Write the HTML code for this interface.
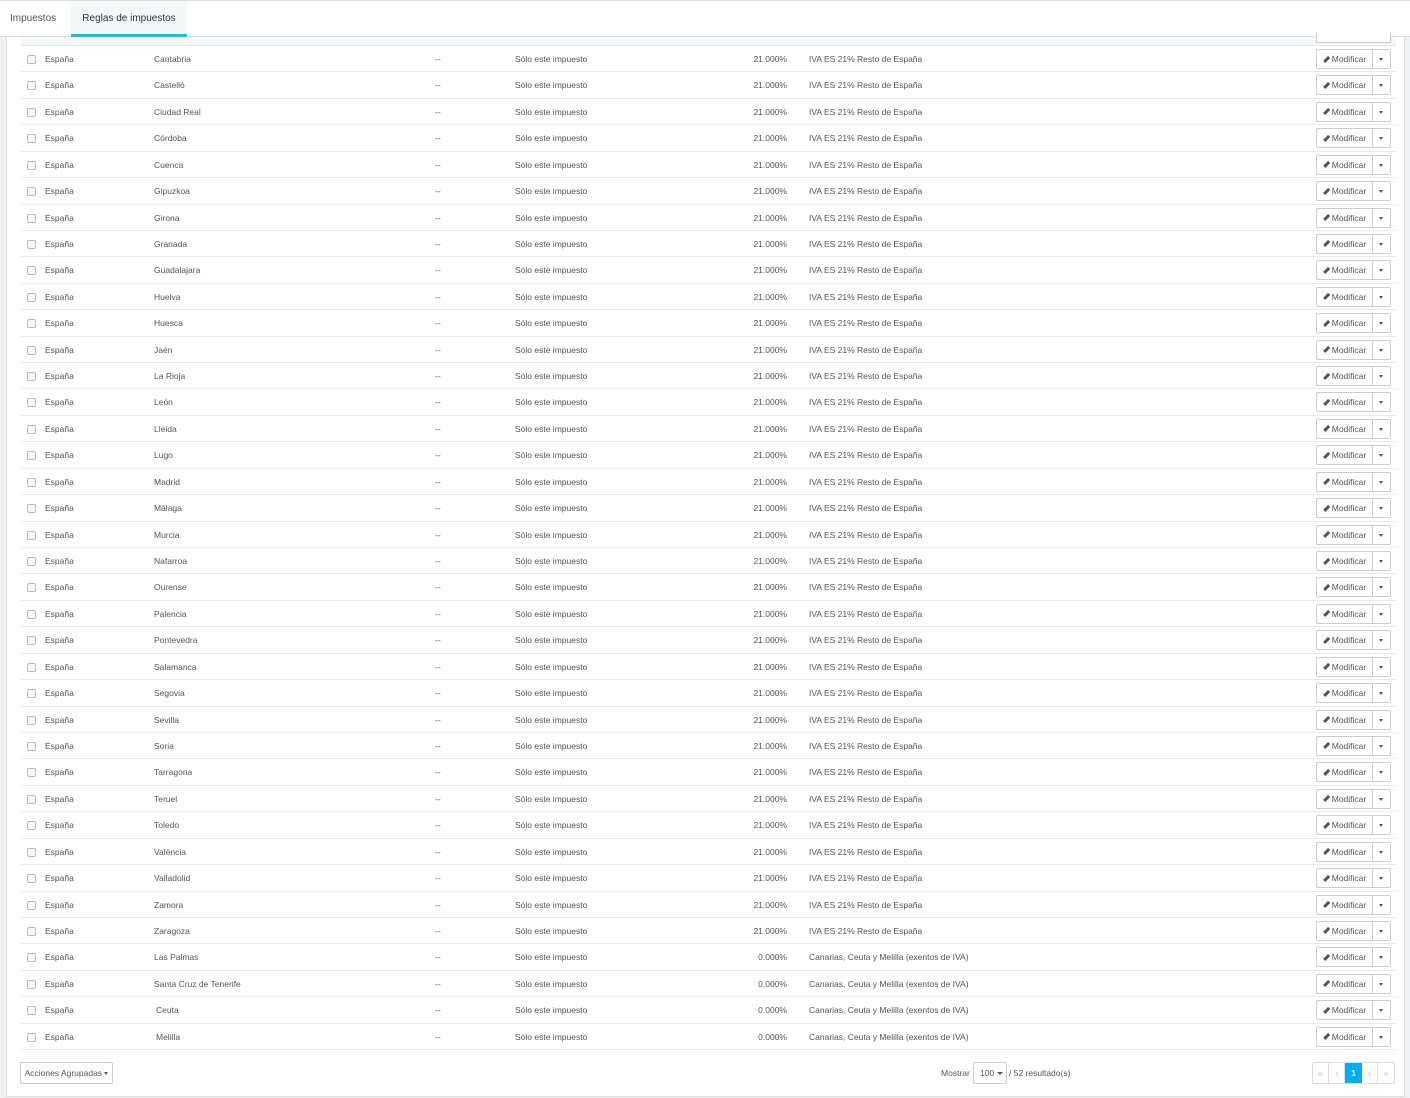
<!DOCTYPE html>
<html><head><meta charset="utf-8"><style>
*{box-sizing:border-box;margin:0;padding:0}
body{width:1410px;height:1098px;overflow:hidden;background:#eff1f2;font-family:"Liberation Sans",sans-serif;font-size:8.5px;color:#555;position:relative}
.top{position:absolute;left:0;top:0;width:1410px;height:37px;background:#fff;border-top:1px solid #ddd;border-bottom:1px solid #ddd}
.tab{position:absolute;top:0;height:36px;line-height:36px;font-size:10px;color:#555}
.tab.a{left:71px;width:116px;background:#f5f8f9;text-align:center;color:#333;border-bottom:3px solid #25b9d7;line-height:36px}
.panel{position:absolute;left:6px;top:37px;width:1399px;height:1060px;background:#fff;border:1px solid #ddd;border-top:0}
.hdr{position:absolute;left:14px;top:0;width:1375px;height:9px;background:#f5f8fa;border-bottom:1px solid #e5e5e5}
.rows{position:absolute;left:14px;top:9px;width:1375px}
.r{height:26.43px;border-bottom:1px solid #eaeaea;position:relative}
.r span{position:absolute;top:0;line-height:26px;white-space:nowrap}
.cb{position:absolute;left:6px;top:9px;width:9px;height:9px;border:1px solid #bbb;border-radius:2px;background:#fafafa}
.c1{left:24px}.c2{left:133px}.c3{left:414px}.c4{left:494px}.c5{right:609px}.c6{left:788px}
.btn{position:absolute;left:1295px;top:3px;width:57px;height:20px;border:1px solid #ccc;border-radius:2px 0 0 2px;background:#fff;line-height:18px;text-align:center;color:#555}
.dd{position:absolute;left:1352px;top:3px;width:18px;height:20px;border:1px solid #ccc;border-left:0;border-radius:0 2px 2px 0;background:#fff}
.dd:after{content:"";position:absolute;left:6px;top:8px;border-left:2.5px solid transparent;border-right:2.5px solid transparent;border-top:3px solid #555}
.btn i{display:inline-block;width:7px;height:2.5px;background:#555;transform:rotate(-45deg);vertical-align:middle;margin-right:2px;margin-top:-2px}
.foot{position:absolute;font-size:8.5px}
</style></head><body>
<div class="top"><div class="tab" style="left:10px">Impuestos</div><div class="tab a">Reglas de impuestos</div></div>
<div class="panel">
<div class="hdr"><div style="position:absolute;left:1295px;top:-4px;width:75px;height:10px;border:1px solid #ccc;border-top:0;background:#fff"></div></div>
<div class="rows">
<div class="r"><div class="cb"></div><span class="c1">España</span><span class="c2">Cantabria</span><span class="c3">--</span><span class="c4">Sólo este impuesto</span><span class="c5">21.000%</span><span class="c6">IVA ES 21% Resto de España</span><div class="btn"><i></i>Modificar</div><div class="dd"></div></div>
<div class="r"><div class="cb"></div><span class="c1">España</span><span class="c2">Castelló</span><span class="c3">--</span><span class="c4">Sólo este impuesto</span><span class="c5">21.000%</span><span class="c6">IVA ES 21% Resto de España</span><div class="btn"><i></i>Modificar</div><div class="dd"></div></div>
<div class="r"><div class="cb"></div><span class="c1">España</span><span class="c2">Ciudad Real</span><span class="c3">--</span><span class="c4">Sólo este impuesto</span><span class="c5">21.000%</span><span class="c6">IVA ES 21% Resto de España</span><div class="btn"><i></i>Modificar</div><div class="dd"></div></div>
<div class="r"><div class="cb"></div><span class="c1">España</span><span class="c2">Córdoba</span><span class="c3">--</span><span class="c4">Sólo este impuesto</span><span class="c5">21.000%</span><span class="c6">IVA ES 21% Resto de España</span><div class="btn"><i></i>Modificar</div><div class="dd"></div></div>
<div class="r"><div class="cb"></div><span class="c1">España</span><span class="c2">Cuenca</span><span class="c3">--</span><span class="c4">Sólo este impuesto</span><span class="c5">21.000%</span><span class="c6">IVA ES 21% Resto de España</span><div class="btn"><i></i>Modificar</div><div class="dd"></div></div>
<div class="r"><div class="cb"></div><span class="c1">España</span><span class="c2">Gipuzkoa</span><span class="c3">--</span><span class="c4">Sólo este impuesto</span><span class="c5">21.000%</span><span class="c6">IVA ES 21% Resto de España</span><div class="btn"><i></i>Modificar</div><div class="dd"></div></div>
<div class="r"><div class="cb"></div><span class="c1">España</span><span class="c2">Girona</span><span class="c3">--</span><span class="c4">Sólo este impuesto</span><span class="c5">21.000%</span><span class="c6">IVA ES 21% Resto de España</span><div class="btn"><i></i>Modificar</div><div class="dd"></div></div>
<div class="r"><div class="cb"></div><span class="c1">España</span><span class="c2">Granada</span><span class="c3">--</span><span class="c4">Sólo este impuesto</span><span class="c5">21.000%</span><span class="c6">IVA ES 21% Resto de España</span><div class="btn"><i></i>Modificar</div><div class="dd"></div></div>
<div class="r"><div class="cb"></div><span class="c1">España</span><span class="c2">Guadalajara</span><span class="c3">--</span><span class="c4">Sólo este impuesto</span><span class="c5">21.000%</span><span class="c6">IVA ES 21% Resto de España</span><div class="btn"><i></i>Modificar</div><div class="dd"></div></div>
<div class="r"><div class="cb"></div><span class="c1">España</span><span class="c2">Huelva</span><span class="c3">--</span><span class="c4">Sólo este impuesto</span><span class="c5">21.000%</span><span class="c6">IVA ES 21% Resto de España</span><div class="btn"><i></i>Modificar</div><div class="dd"></div></div>
<div class="r"><div class="cb"></div><span class="c1">España</span><span class="c2">Huesca</span><span class="c3">--</span><span class="c4">Sólo este impuesto</span><span class="c5">21.000%</span><span class="c6">IVA ES 21% Resto de España</span><div class="btn"><i></i>Modificar</div><div class="dd"></div></div>
<div class="r"><div class="cb"></div><span class="c1">España</span><span class="c2">Jaén</span><span class="c3">--</span><span class="c4">Sólo este impuesto</span><span class="c5">21.000%</span><span class="c6">IVA ES 21% Resto de España</span><div class="btn"><i></i>Modificar</div><div class="dd"></div></div>
<div class="r"><div class="cb"></div><span class="c1">España</span><span class="c2">La Rioja</span><span class="c3">--</span><span class="c4">Sólo este impuesto</span><span class="c5">21.000%</span><span class="c6">IVA ES 21% Resto de España</span><div class="btn"><i></i>Modificar</div><div class="dd"></div></div>
<div class="r"><div class="cb"></div><span class="c1">España</span><span class="c2">León</span><span class="c3">--</span><span class="c4">Sólo este impuesto</span><span class="c5">21.000%</span><span class="c6">IVA ES 21% Resto de España</span><div class="btn"><i></i>Modificar</div><div class="dd"></div></div>
<div class="r"><div class="cb"></div><span class="c1">España</span><span class="c2">Lleida</span><span class="c3">--</span><span class="c4">Sólo este impuesto</span><span class="c5">21.000%</span><span class="c6">IVA ES 21% Resto de España</span><div class="btn"><i></i>Modificar</div><div class="dd"></div></div>
<div class="r"><div class="cb"></div><span class="c1">España</span><span class="c2">Lugo</span><span class="c3">--</span><span class="c4">Sólo este impuesto</span><span class="c5">21.000%</span><span class="c6">IVA ES 21% Resto de España</span><div class="btn"><i></i>Modificar</div><div class="dd"></div></div>
<div class="r"><div class="cb"></div><span class="c1">España</span><span class="c2">Madrid</span><span class="c3">--</span><span class="c4">Sólo este impuesto</span><span class="c5">21.000%</span><span class="c6">IVA ES 21% Resto de España</span><div class="btn"><i></i>Modificar</div><div class="dd"></div></div>
<div class="r"><div class="cb"></div><span class="c1">España</span><span class="c2">Málaga</span><span class="c3">--</span><span class="c4">Sólo este impuesto</span><span class="c5">21.000%</span><span class="c6">IVA ES 21% Resto de España</span><div class="btn"><i></i>Modificar</div><div class="dd"></div></div>
<div class="r"><div class="cb"></div><span class="c1">España</span><span class="c2">Murcia</span><span class="c3">--</span><span class="c4">Sólo este impuesto</span><span class="c5">21.000%</span><span class="c6">IVA ES 21% Resto de España</span><div class="btn"><i></i>Modificar</div><div class="dd"></div></div>
<div class="r"><div class="cb"></div><span class="c1">España</span><span class="c2">Nafarroa</span><span class="c3">--</span><span class="c4">Sólo este impuesto</span><span class="c5">21.000%</span><span class="c6">IVA ES 21% Resto de España</span><div class="btn"><i></i>Modificar</div><div class="dd"></div></div>
<div class="r"><div class="cb"></div><span class="c1">España</span><span class="c2">Ourense</span><span class="c3">--</span><span class="c4">Sólo este impuesto</span><span class="c5">21.000%</span><span class="c6">IVA ES 21% Resto de España</span><div class="btn"><i></i>Modificar</div><div class="dd"></div></div>
<div class="r"><div class="cb"></div><span class="c1">España</span><span class="c2">Palencia</span><span class="c3">--</span><span class="c4">Sólo este impuesto</span><span class="c5">21.000%</span><span class="c6">IVA ES 21% Resto de España</span><div class="btn"><i></i>Modificar</div><div class="dd"></div></div>
<div class="r"><div class="cb"></div><span class="c1">España</span><span class="c2">Pontevedra</span><span class="c3">--</span><span class="c4">Sólo este impuesto</span><span class="c5">21.000%</span><span class="c6">IVA ES 21% Resto de España</span><div class="btn"><i></i>Modificar</div><div class="dd"></div></div>
<div class="r"><div class="cb"></div><span class="c1">España</span><span class="c2">Salamanca</span><span class="c3">--</span><span class="c4">Sólo este impuesto</span><span class="c5">21.000%</span><span class="c6">IVA ES 21% Resto de España</span><div class="btn"><i></i>Modificar</div><div class="dd"></div></div>
<div class="r"><div class="cb"></div><span class="c1">España</span><span class="c2">Segovia</span><span class="c3">--</span><span class="c4">Sólo este impuesto</span><span class="c5">21.000%</span><span class="c6">IVA ES 21% Resto de España</span><div class="btn"><i></i>Modificar</div><div class="dd"></div></div>
<div class="r"><div class="cb"></div><span class="c1">España</span><span class="c2">Sevilla</span><span class="c3">--</span><span class="c4">Sólo este impuesto</span><span class="c5">21.000%</span><span class="c6">IVA ES 21% Resto de España</span><div class="btn"><i></i>Modificar</div><div class="dd"></div></div>
<div class="r"><div class="cb"></div><span class="c1">España</span><span class="c2">Soria</span><span class="c3">--</span><span class="c4">Sólo este impuesto</span><span class="c5">21.000%</span><span class="c6">IVA ES 21% Resto de España</span><div class="btn"><i></i>Modificar</div><div class="dd"></div></div>
<div class="r"><div class="cb"></div><span class="c1">España</span><span class="c2">Tarragona</span><span class="c3">--</span><span class="c4">Sólo este impuesto</span><span class="c5">21.000%</span><span class="c6">IVA ES 21% Resto de España</span><div class="btn"><i></i>Modificar</div><div class="dd"></div></div>
<div class="r"><div class="cb"></div><span class="c1">España</span><span class="c2">Teruel</span><span class="c3">--</span><span class="c4">Sólo este impuesto</span><span class="c5">21.000%</span><span class="c6">IVA ES 21% Resto de España</span><div class="btn"><i></i>Modificar</div><div class="dd"></div></div>
<div class="r"><div class="cb"></div><span class="c1">España</span><span class="c2">Toledo</span><span class="c3">--</span><span class="c4">Sólo este impuesto</span><span class="c5">21.000%</span><span class="c6">IVA ES 21% Resto de España</span><div class="btn"><i></i>Modificar</div><div class="dd"></div></div>
<div class="r"><div class="cb"></div><span class="c1">España</span><span class="c2">València</span><span class="c3">--</span><span class="c4">Sólo este impuesto</span><span class="c5">21.000%</span><span class="c6">IVA ES 21% Resto de España</span><div class="btn"><i></i>Modificar</div><div class="dd"></div></div>
<div class="r"><div class="cb"></div><span class="c1">España</span><span class="c2">Valladolid</span><span class="c3">--</span><span class="c4">Sólo este impuesto</span><span class="c5">21.000%</span><span class="c6">IVA ES 21% Resto de España</span><div class="btn"><i></i>Modificar</div><div class="dd"></div></div>
<div class="r"><div class="cb"></div><span class="c1">España</span><span class="c2">Zamora</span><span class="c3">--</span><span class="c4">Sólo este impuesto</span><span class="c5">21.000%</span><span class="c6">IVA ES 21% Resto de España</span><div class="btn"><i></i>Modificar</div><div class="dd"></div></div>
<div class="r"><div class="cb"></div><span class="c1">España</span><span class="c2">Zaragoza</span><span class="c3">--</span><span class="c4">Sólo este impuesto</span><span class="c5">21.000%</span><span class="c6">IVA ES 21% Resto de España</span><div class="btn"><i></i>Modificar</div><div class="dd"></div></div>
<div class="r"><div class="cb"></div><span class="c1">España</span><span class="c2">Las Palmas</span><span class="c3">--</span><span class="c4">Sólo este impuesto</span><span class="c5">0.000%</span><span class="c6">Canarias, Ceuta y Melilla (exentos de IVA)</span><div class="btn"><i></i>Modificar</div><div class="dd"></div></div>
<div class="r"><div class="cb"></div><span class="c1">España</span><span class="c2">Santa Cruz de Tenerife</span><span class="c3">--</span><span class="c4">Sólo este impuesto</span><span class="c5">0.000%</span><span class="c6">Canarias, Ceuta y Melilla (exentos de IVA)</span><div class="btn"><i></i>Modificar</div><div class="dd"></div></div>
<div class="r"><div class="cb"></div><span class="c1">España</span><span class="c2" style="left:135px">Ceuta</span><span class="c3">--</span><span class="c4">Sólo este impuesto</span><span class="c5">0.000%</span><span class="c6">Canarias, Ceuta y Melilla (exentos de IVA)</span><div class="btn"><i></i>Modificar</div><div class="dd"></div></div>
<div class="r"><div class="cb"></div><span class="c1">España</span><span class="c2" style="left:135px">Melilla</span><span class="c3">--</span><span class="c4">Sólo este impuesto</span><span class="c5">0.000%</span><span class="c6">Canarias, Ceuta y Melilla (exentos de IVA)</span><div class="btn"><i></i>Modificar</div><div class="dd"></div></div>
</div>
</div>
<div class="foot" style="left:20px;top:1062px;width:93px;height:22px;border:1px solid #ccc;border-radius:2px;line-height:20px;text-align:center;background:#fff">Acciones Agrupadas <span style="display:inline-block;border-left:2.5px solid transparent;border-right:2.5px solid transparent;border-top:3px solid #555;vertical-align:middle"></span></div>
<div class="foot" style="left:941px;top:1062px;line-height:22px">Mostrar</div>
<div class="foot" style="left:973px;top:1062px;width:34px;height:22px;border:1px solid #ccc;border-radius:2px;line-height:20px;padding-left:6px;background:#fff">100 <span style="display:inline-block;border-left:3px solid transparent;border-right:3px solid transparent;border-top:3px solid #555;vertical-align:middle"></span></div>
<div class="foot" style="left:1009px;top:1062px;line-height:22px">/ 52 resultado(s)</div>
<div class="foot" style="left:1312px;top:1062px;width:83px;height:22px;border:1px solid #ddd;border-radius:2px;background:#fff;display:flex;color:#bbb;line-height:20px;text-align:center">
<div style="width:16px;border-right:1px solid #ddd">«</div><div style="width:16px;border-right:1px solid #ddd">‹</div><div style="width:17px;background:#00aff0;color:#fff;font-weight:bold">1</div><div style="width:16px;border-right:1px solid #ddd">›</div><div style="width:16px">»</div></div>
</body></html>
